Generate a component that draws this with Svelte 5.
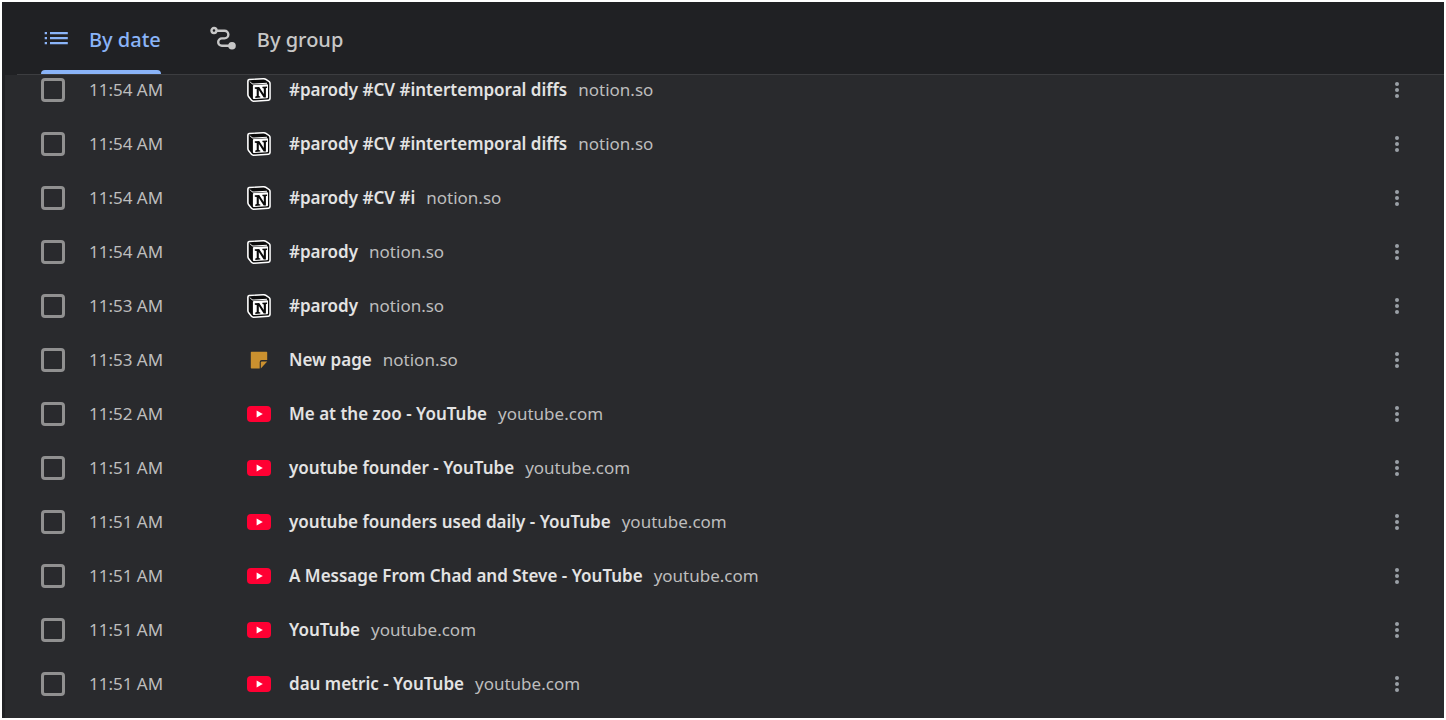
<script>
  const visits = [
    ['11:54 AM', 'notion', '#parody #CV #intertemporal diffs', 'notion.so'],
    ['11:54 AM', 'notion', '#parody #CV #intertemporal diffs', 'notion.so'],
    ['11:54 AM', 'notion', '#parody #CV #i', 'notion.so'],
    ['11:54 AM', 'notion', '#parody', 'notion.so'],
    ['11:53 AM', 'notion', '#parody', 'notion.so'],
    ['11:53 AM', 'note', 'New page', 'notion.so'],
    ['11:52 AM', 'youtube', 'Me at the zoo - YouTube', 'youtube.com'],
    ['11:51 AM', 'youtube', 'youtube founder - YouTube', 'youtube.com'],
    ['11:51 AM', 'youtube', 'youtube founders used daily - YouTube', 'youtube.com'],
    ['11:51 AM', 'youtube', 'A Message From Chad and Steve - YouTube', 'youtube.com'],
    ['11:51 AM', 'youtube', 'YouTube', 'youtube.com'],
    ['11:51 AM', 'youtube', 'dau metric - YouTube', 'youtube.com'],
  ].map(([time, icon, title, domain]) => ({ time, icon, title, domain }));

  let tab = $state('date');
</script>

<div class="window">
  <nav class="tabs">
    <button class="tab" class:selected={tab === 'date'} onclick={() => (tab = 'date')}>
      <svg class="tab-icon" viewBox="0 0 28 28" aria-hidden="true">
        <path fill="currentColor" d="M3.700 5.900H6v2.300H3.700zM9 5.900h17.800v2.300H9zM3.700 10.900H6v2.300H3.700zM9 10.900h17.800v2.300H9zM3.700 15.900H6v2.300H3.700zM9 15.900h17.800v2.300H9z" />
      </svg>
      <span>By date</span>
    </button>
    <button class="tab" class:selected={tab === 'group'} onclick={() => (tab = 'group')}>
      <svg class="tab-icon" viewBox="0 0 28 28" aria-hidden="true">
        <g fill="none" stroke="currentColor" stroke-width="2.4">
          <circle cx="5" cy="4.500" r="2.500" />
          <path d="M8 4.700h7.500a3.850 3.850 0 0 1 0 7.700h-2.600a3.700 3.700 0 0 0 0 7.400h8" />
        </g>
        <circle cx="23" cy="19.800" r="3.800" fill="currentColor" />
      </svg>
      <span>By group</span>
    </button>
  </nav>

  <main class="history">
    <ul>
      {#each visits as visit}
        <li>
          <input type="checkbox" aria-label={visit.title} />
          <time>{visit.time}</time>
          <svg class="favicon" viewBox="0 0 24 24" aria-hidden="true">
            {#if visit.icon === 'notion'}
              <path fill="#fff" d="M2 .8 16.200 0q2-.1 3.200.8l3.500 2.500q.9.800.9 2.100v15.100q0 2.300-2.300 2.500L6.900 24q-1.900.1-3-1.200L.9 19Q.1 17.900.1 16.600V3Q.1 1 2 .8z" />
              <path fill="#0b0b0b" d="m2.700 2.200 13.500-.8q1.300-.1 2.200.5l3.100 2.200q.8.600.8 1.600v14.200q0 1.600-1.500 1.700l-13.900.9q-1.200.1-1.900-.8l-2.700-3.500q-.6-.8-.6-1.800V3.300q0-1 1-1.100z" />
              <path fill="#fff" d="m2.700 3.300 2.500 1.900q.6.500 1.500.400l13.300-.8v.9l-13 .8q-1.200.1-2.100-.6L2.700 4z" />
              <path fill="#fff" d="m7 7 13-.8q1-.1 1 .9v12.200q0 .9-1 1l-13 .8q-1.100.1-1.100-1V8.100q0-1 1.100-1.100z" />
              <path fill="#0b0b0b" d="m7.800 9.200 4.400-.3 4.600 7.100v-5.600l-1.400-.3V8.700l4.700-.3v1.300l-1.200.6v9.100l-2.200.2-4.900-7.600v6l1.500.4v1.200l-5 .3v-1.300l1.400-.6v-7l-1.900-.3z" />
            {:else if visit.icon === 'note'}
              <path fill="#cb912f" d="M4.500 3.700h15q.7 0 .7.700V12h-5.500q-2 0-2 2v6.500H4.500q-.7 0-.7-.700V4.400q0-.7.7-.7z" />
              <path fill="#cb912f" d="M13.800 20.500v-6q0-1 1-1h5.400z" />
            {:else}
              <rect y="4" width="24" height="16" rx="4" fill="#f03" />
              <path fill="#fff" d="m9.600 8.500 6.200 3.500-6.200 3.500z" />
            {/if}
          </svg>
          <a class="title" href="#visit">{visit.title}</a>
          <span class="domain">{visit.domain}</span>
          <button class="more" aria-label="More actions">
            <svg viewBox="0 0 24 24" fill="currentColor" aria-hidden="true">
              <circle cx="12" cy="6" r="2" /><circle cx="12" cy="12" r="2" /><circle cx="12" cy="18" r="2" />
            </svg>
          </button>
        </li>
      {/each}
    </ul>
  </main>
</div>

<style>
  :global(body) {
    background: #fff;
  }
  .window {
    box-sizing: border-box;
    height: 100vh;
    border: 2px solid #fff;
    display: flex;
    flex-direction: column;
    background: #202124;
    color: #c7c7c7;
    font: 17px/24px 'Noto Sans', 'Open Sans', sans-serif;
  }
  button {
    border: 0;
    padding: 0;
    background: none;
    color: inherit;
    font: inherit;
    cursor: pointer;
  }
  .tabs {
    flex: none;
    display: flex;
    gap: 48px;
    height: 72px;
    margin-left: 15px;
    padding-left: 24px;
    border-bottom: 1px solid #3c3d40;
  }
  .tab {
    display: flex;
    align-items: center;
    gap: 20px;
    padding-top: 8px;
    border-bottom: 4px solid transparent;
    font-size: 20px;
    font-weight: 500;
    position: relative;
  }
  .tab.selected {
    color: #8ab4f8;
  }
  .tab.selected::after {
    content: '';
    position: absolute;
    inset: auto 0 -4px;
    height: 4px;
    border-radius: 4px 4px 0 0;
    background: #8ab4f8;
  }
  .tab-icon {
    width: 28px;
    height: 28px;
  }
  .history {
    flex: 1;
    min-height: 0;
    overflow: hidden;
    margin-left: 3px;
    background: #292a2d;
  }
  ul {
    list-style: none;
    margin: -12px 0 0;
    padding: 0 35px 0 36px;
  }
  li {
    display: flex;
    align-items: center;
    height: 54px;
    white-space: nowrap;
  }
  input {
    appearance: none;
    flex: none;
    box-sizing: border-box;
    width: 24px;
    height: 24px;
    margin: 0 24px 0 0;
    border: 3px solid #909090;
    border-radius: 4px;
  }
  input:checked {
    background: #8ab4f8;
    border-color: #8ab4f8;
  }
  time {
    width: 158px;
    color: #bdbdbd;
  }
  .favicon {
    flex: none;
    width: 24px;
    height: 24px;
    margin-right: 18px;
  }
  .title {
    margin-right: 11px;
    color: #e3e3e3;
    font-weight: 600;
    text-decoration: none;
  }
  .domain {
    color: #bdbdbd;
  }
  .more {
    flex: none;
    width: 24px;
    height: 24px;
    margin-left: auto;
    color: #9aa0a6;
  }
  .more svg {
    display: block;
    width: 24px;
    height: 24px;
  }
</style>
